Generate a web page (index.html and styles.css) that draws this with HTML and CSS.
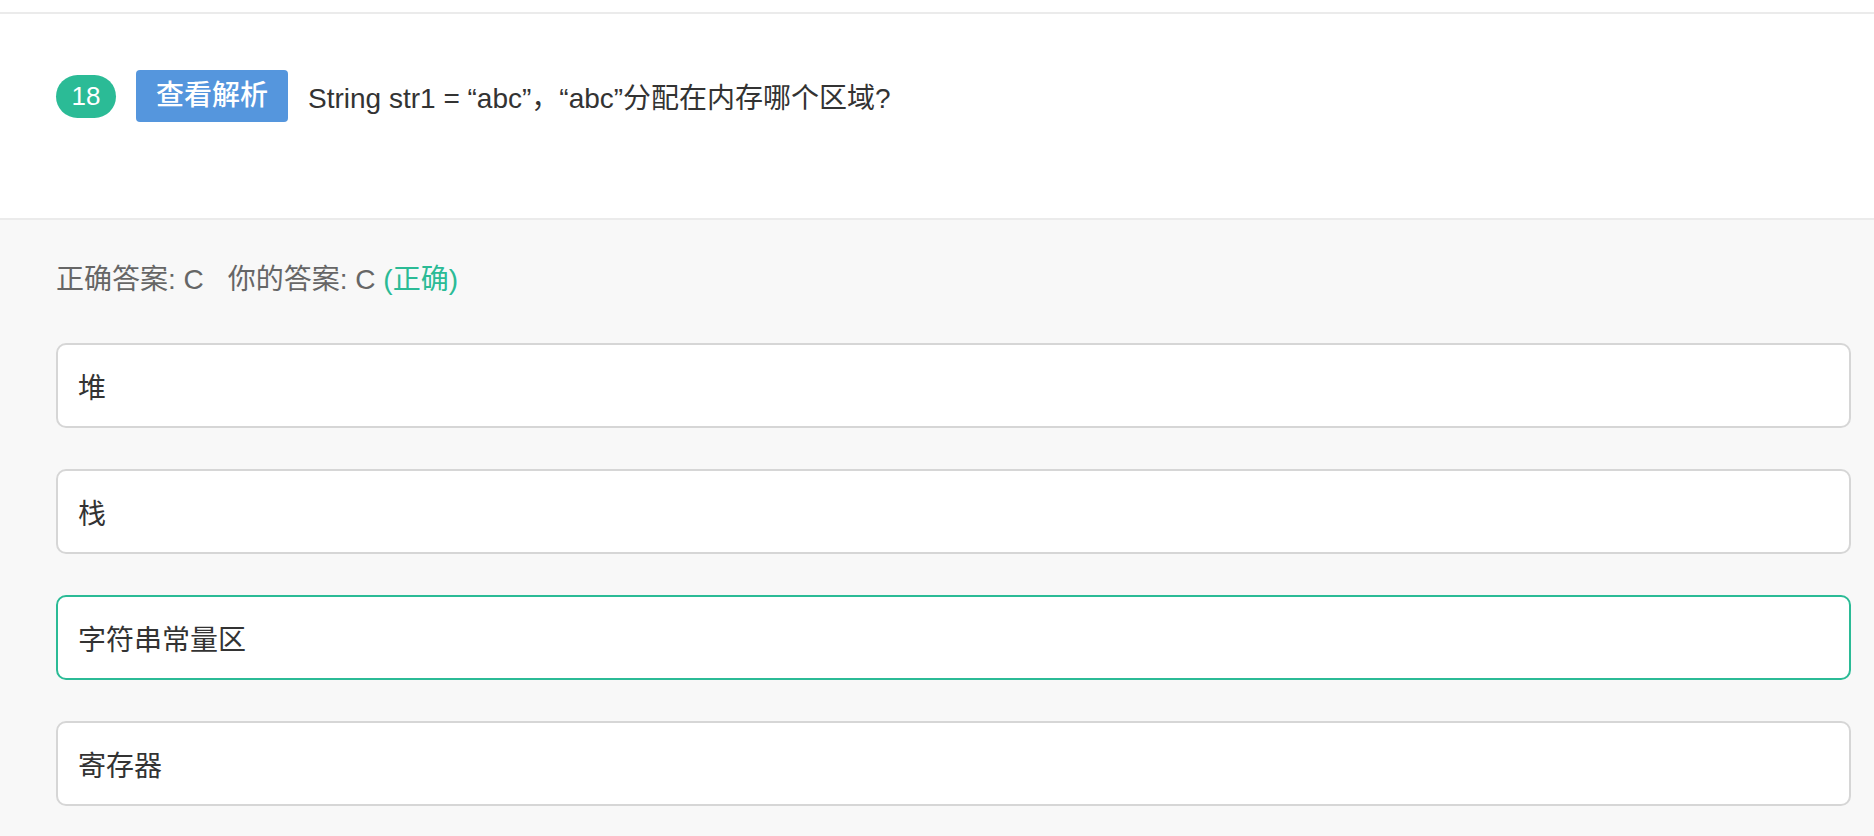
FILE: index.html
```html
<!DOCTYPE html>
<html lang="zh-CN">
<head>
<meta charset="utf-8">
<title>题目 18</title>
<link rel="stylesheet" href="styles.css">
</head>
<body>
<div class="topbar"></div>
<section class="question">
  <div class="question-row">
    <span class="num-badge">18</span>
    <button class="analysis-btn" type="button">查看解析</button>
    <span class="question-text">String str1 = “abc”，“abc”分配在内存哪个区域?</span>
  </div>
</section>
<section class="answer-area">
  <div class="answer-line">
    <span>正确答案: C</span><span class="mine">你的答案: C <span class="ok">(正确)</span></span>
  </div>
  <ul class="options">
    <li class="option">堆</li>
    <li class="option">栈</li>
    <li class="option correct">字符串常量区</li>
    <li class="option">寄存器</li>
  </ul>
</section>
</body>
</html>
```
FILE: styles.css
```css
html, body {
  margin: 0;
  padding: 0;
}
body {
  font-family: "Liberation Sans", "Noto Sans CJK SC", sans-serif;
  background: #f8f8f8;
  color: #333;
}
.topbar {
  height: 12px;
  background: #fff;
  border-bottom: 2px solid #ebebeb;
}
.question {
  box-sizing: border-box;
  height: 206px;
  padding: 56px 23px 0 56px;
  background: #fff;
  border-bottom: 2px solid #ebebeb;
}
.question-row {
  display: flex;
  align-items: center;
  gap: 20px;
}
.num-badge {
  display: inline-flex;
  align-items: center;
  justify-content: center;
  width: 60px;
  height: 43px;
  border-radius: 22px;
  background: #2bbb96;
  color: #fff;
  font-size: 26px;
  font-weight: 500;
}
.analysis-btn {
  height: 52px;
  padding: 0 20px;
  border: none;
  border-radius: 4px;
  background: #5596dd;
  color: #fff;
  font-family: inherit;
  font-size: 28px;
  font-weight: 500;
  line-height: 52px;
}
.question-text {
  font-size: 28px;
  color: #333;
}
.answer-area {
  padding: 40px 23px 40px 56px;
  background: #f8f8f8;
}
.answer-line {
  font-size: 28px;
  line-height: 40px;
  color: #666;
}
.mine {
  margin-left: 24px;
}
.ok {
  color: #2bbb96;
}
.options {
  list-style: none;
  margin: 43px 0 0;
  padding: 0;
  display: flex;
  flex-direction: column;
  gap: 41px;
}
.option {
  box-sizing: border-box;
  height: 85px;
  display: flex;
  align-items: center;
  padding: 0 20px;
  background: #fff;
  border: 2px solid #d6d6d6;
  border-radius: 10px;
  font-size: 28px;
  color: #333;
}
.option.correct {
  border-color: #2bbb96;
}
```
